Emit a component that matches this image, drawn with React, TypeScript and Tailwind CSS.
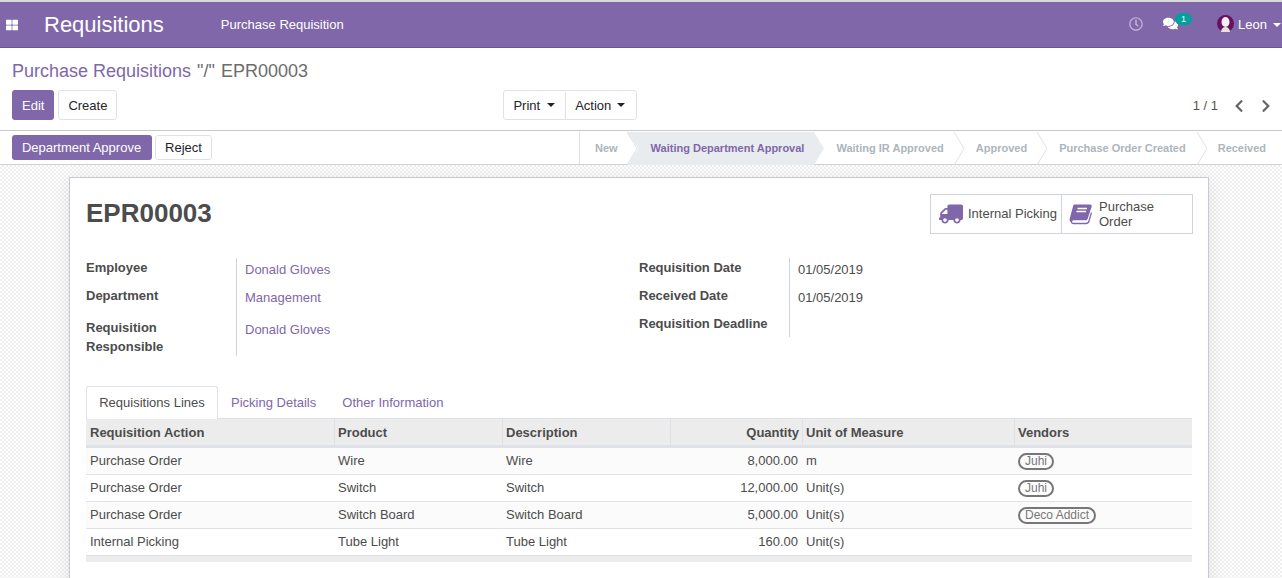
import { FaThLarge, FaTruck, FaComments, FaRegClock, FaChevronLeft, FaChevronRight } from 'react-icons/fa';

const stages = [
  { label: 'New', cls: 'pl-[15px] pr-[9px]' },
  { label: 'Waiting Department Approval', cls: 'pl-[24px] pr-[10px]', active: true },
  { label: 'Waiting IR Approved', cls: 'pl-[22px] pr-[10px]' },
  { label: 'Approved', cls: 'pl-[22px] pr-[10px]' },
  { label: 'Purchase Order Created', cls: 'pl-[22px] pr-[11px]' },
  { label: 'Received', cls: 'pl-[21px] pr-[16px]', last: true },
];

const lines = [
  { action: 'Purchase Order', product: 'Wire', qty: '8,000.00', uom: 'm', vendor: 'Juhi' },
  { action: 'Purchase Order', product: 'Switch', qty: '12,000.00', uom: 'Unit(s)', vendor: 'Juhi' },
  { action: 'Purchase Order', product: 'Switch Board', qty: '5,000.00', uom: 'Unit(s)', vendor: 'Deco Addict' },
  { action: 'Internal Picking', product: 'Tube Light', qty: '160.00', uom: 'Unit(s)', vendor: '' },
];

const Caret = () => <span className="inline-block border-x-[4px] border-t-[4px] border-x-transparent border-t-current" />;

const BookIcon = () => (
  <svg width="23" height="21" viewBox="0 0 23 21" className="shrink-0">
    <path
      d="M5.500 .5H21C22.500 .5 23 1.500 22.600 2.700L18.800 14.500C18.400 15.800 17.500 16.300 16.300 16.300H4L1.500 18C.3 16.500 .5 15 1 13.500L4 2.500C4.300 1.300 4.800 .5 5.500 .5Z"
      fill="#8067a9"
    />
    <path d="M3.500 15.500C2 17 2 19.500 4.500 19.500H17C18.500 19.500 19.500 18.800 20 17L22.500 8.500" fill="none" stroke="#8067a9" strokeWidth="1.300" />
    <path d="M8.500 4.500H18M7.500 7.500H17" stroke="#fff" strokeWidth="1.400" />
  </svg>
);

const App = () => {
  return (
    <div className="h-[578px] w-[1282px] overflow-hidden bg-white font-['Liberation_Sans',sans-serif] text-[13px] text-[#4c4c4c]">
      {/* Top nav */}
      <div className="h-[2px] bg-[#d9d9d9]" />
      <nav className="flex h-[46px] items-center border-b border-[#6a5391] bg-[#8067a9] text-white">
        <FaThLarge className="ml-[6px] text-[12px]" />
        <span className="ml-[26px] text-[22px] leading-none">Requisitions</span>
        <span className="ml-[57px]">Purchase Requisition</span>
        <div className="ml-auto flex items-center pb-[2px]">
          <FaRegClock className="text-[14px] text-white/50" />
          <div className="relative ml-[20px] mr-[39px]">
            <FaComments className="text-[15px]" />
            <span className="absolute -top-[3px] left-[12px] flex h-[12px] w-[17px] items-center justify-center rounded-full bg-[#00a09d] text-[9px] leading-none">1</span>
          </div>
          <svg width="17" height="17" viewBox="0 0 17 17" className="mr-[4px]">
            <circle cx="8.500" cy="8.500" r="8.500" fill="#6b0f5f" />
            <ellipse cx="8.500" cy="7" rx="4" ry="5" fill="#f1efef" />
            <path d="M4 17c0-3 2-5 4.500-5s4.500 2 4.500 5z" fill="#e3e0e0" />
          </svg>
          <span className="pt-[2px]">Leon</span>
          <span className="ml-[6px] mr-px flex pt-[2px]"><Caret /></span>
        </div>
      </nav>

      {/* Control panel */}
      <div className="h-[83px] border-b border-[#c8c8c8] px-3">
        <div className="pt-[12px] text-[18px] leading-[22px] text-[#6c6c6c]">
          <span className="text-[#8067a9]">Purchase Requisitions</span>
          <span className="ml-px"> "/"</span>
          <span className="ml-px"> EPR00003</span>
        </div>
        <div className="mt-[8px] flex items-center">
          <button className="h-[30px] rounded-[3px] bg-[#8067a9] px-[10px] pt-px text-white">Edit</button>
          <button className="ml-[4px] h-[30px] w-[59px] rounded-[3px] border border-[#dee2e6] pt-px text-[#212529]">Create</button>
          <div className="ml-[386px] flex h-[30px] w-[134px] rounded-[3px] border border-[#dee2e6] pt-px text-[#212529]">
            <button className="flex items-center border-r border-[#dee2e6] pl-[9px] pr-[10px]">Print <span className="ml-[7px] mb-px flex"><Caret /></span></button>
            <button className="flex items-center pl-[9px]">Action <span className="ml-[6px] mb-px flex"><Caret /></span></button>
          </div>
          <div className="ml-auto mr-[-3px] flex items-center pt-px text-[#555]">
            <span>1 / 1</span>
            <FaChevronLeft className="ml-[14px] text-[14px] text-[#666]" />
            <FaChevronRight className="ml-[13px] text-[14px] text-[#666]" />
          </div>
        </div>
      </div>

      {/* Status bar */}
      <div className="flex h-[34px] items-center border-b border-[#cfd1d9] pl-3">
        <button className="h-[25px] w-[140px] rounded-[3px] bg-[#8067a9] pr-px text-white">Department Approve</button>
        <button className="ml-[3px] h-[25px] w-[57px] rounded-[3px] border border-[#dee2e6] text-[#212529]">Reject</button>
        <div className="ml-auto flex h-full self-stretch border-l border-[#dee2e6] pt-px text-[11px] font-bold text-[#adb5bd]">
          {stages.map((s) => (
            <div key={s.label} className={`relative flex items-center ${s.cls} ${s.active ? 'text-[#8067a9]' : ''}`}>
              {s.active && (
                <svg className="absolute left-0 top-0 h-[33px] w-full" preserveAspectRatio="none" viewBox="0 0 100 33">
                  <polygon points="0,0 100,0 100,33 0,33 6,16.500" fill="#e9ecef" />
                </svg>
              )}
              <span className="relative">{s.label}</span>
              {!s.last && (
                <svg className="absolute left-full top-0 z-10" width="11" height="33" viewBox="0 0 11 33">
                  {s.active ? (
                    <polygon points="0,0 10,16.500 0,33" fill="#e9ecef" />
                  ) : (
                    <path d="M0 0 L10 16.500 L0 33" fill="#fff" stroke="#dee2e6" />
                  )}
                </svg>
              )}
            </div>
          ))}
        </div>
      </div>

      {/* Sheet background */}
      <div className="h-[414px] bg-[repeating-conic-gradient(#efefef_0_25%,#ffffff_0_50%)] bg-[length:4px_4px] pt-[12px]">
        <div className="ml-[69px] h-[420px] w-[1140px] border border-[#c9c9d6] bg-white px-4 pt-[16px] shadow-[0_4px_20px_rgba(0,0,0,0.1)]">
          <div className="flex items-start justify-between">
            <h1 className="mt-px text-[26px] font-bold leading-[36px]">EPR00003</h1>
            <div className="-mr-px flex h-[40px] w-[263px] border border-[#ced4da]">
              <div className="flex w-[131px] items-center border-r border-[#ced4da] pl-[8px]">
                <FaTruck className="-scale-x-100 text-[24px] text-[#8067a9]" />
                <span className="ml-[5px] whitespace-nowrap">Internal Picking</span>
              </div>
              <div className="flex flex-1 items-center pl-[7px]">
                <BookIcon />
                <span className="ml-[7px] leading-[15px]">Purchase<br />Order</span>
              </div>
            </div>
          </div>

          <div className="mt-[24px] flex">
            <div className="flex w-[553px]">
              <div className="w-[150px] shrink-0 font-bold">
                <div className="h-[28px]">Employee</div>
                <div className="h-[32px]">Department</div>
                <div className="leading-[19px]">Requisition<br />Responsible</div>
              </div>
              <div className="h-[98px] border-l border-[#ced4da] pl-[8px] text-[#8067a9]">
                <div className="h-[28px] pt-[2px]">Donald Gloves</div>
                <div className="h-[32px] pt-[2px]">Management</div>
                <div className="pt-[2px]">Donald Gloves</div>
              </div>
            </div>
            <div className="flex">
              <div className="w-[150px] shrink-0 font-bold">
                <div className="h-[28px]">Requisition Date</div>
                <div className="h-[28px]">Received Date</div>
                <div>Requisition Deadline</div>
              </div>
              <div className="h-[79px] border-l border-[#ced4da] pl-[8px]">
                <div className="h-[28px] pt-[2px]">01/05/2019</div>
                <div className="pt-[2px]">01/05/2019</div>
              </div>
            </div>
          </div>

          {/* Tabs */}
          <div className="mt-[30px] flex h-[33px] items-stretch">
            <div className="z-10 flex w-[132px] items-center justify-center rounded-t-[3px] border border-b-0 border-[#dee2e6] bg-white">Requisitions Lines</div>
            <span className="ml-[13px] flex items-center text-[#8067a9]">Picking Details</span>
            <span className="ml-[26px] flex items-center text-[#8067a9]">Other Information</span>
          </div>

          <table className="-mt-px w-[1106px] table-fixed border-separate border-spacing-0">
            <colgroup>
              <col className="w-[248px]" />
              <col className="w-[168px]" />
              <col className="w-[168px]" />
              <col className="w-[132px]" />
              <col className="w-[212px]" />
              <col />
            </colgroup>
            <thead>
              <tr className="font-bold [&>th]:h-[30px] [&>th]:border-t [&>th]:border-b-[3px] [&>th]:border-l [&>th]:border-[#dee2e6] [&>th]:bg-[#ececec] [&>th]:pl-[3px] [&>th]:pr-[3px] [&>th]:pt-px [&>th]:text-left [&>th:first-child]:border-l-0 [&>th:first-child]:pl-[4px]">
                <th>Requisition Action</th>
                <th>Product</th>
                <th>Description</th>
                <th className="!text-right">Quantity</th>
                <th>Unit of Measure</th>
                <th>Vendors</th>
              </tr>
            </thead>
            <tbody>
              {lines.map((l, i) => (
                <tr key={i} className={`${i % 2 === 0 ? '[&>td]:bg-[#fbfbfb]' : '[&>td]:bg-white'} [&>td]:h-[27px] [&>td]:border-b [&>td]:border-[#dee2e6] [&>td]:px-[4px]`}>
                  <td>{l.action}</td>
                  <td>{l.product}</td>
                  <td>{l.product}</td>
                  <td className="text-right">{l.qty}</td>
                  <td>{l.uom}</td>
                  <td>
                    {l.vendor && (
                      <span className="-mt-px inline-block rounded-full border-2 border-[#777] px-[5px] align-middle text-[12px] leading-[13px] text-[#777]">{l.vendor}</span>
                    )}
                  </td>
                </tr>
              ))}
            </tbody>
          </table>
          <div className="h-[6px] w-[1106px] bg-[#ececec]" />
        </div>
      </div>
    </div>
  );
};

export default App;
